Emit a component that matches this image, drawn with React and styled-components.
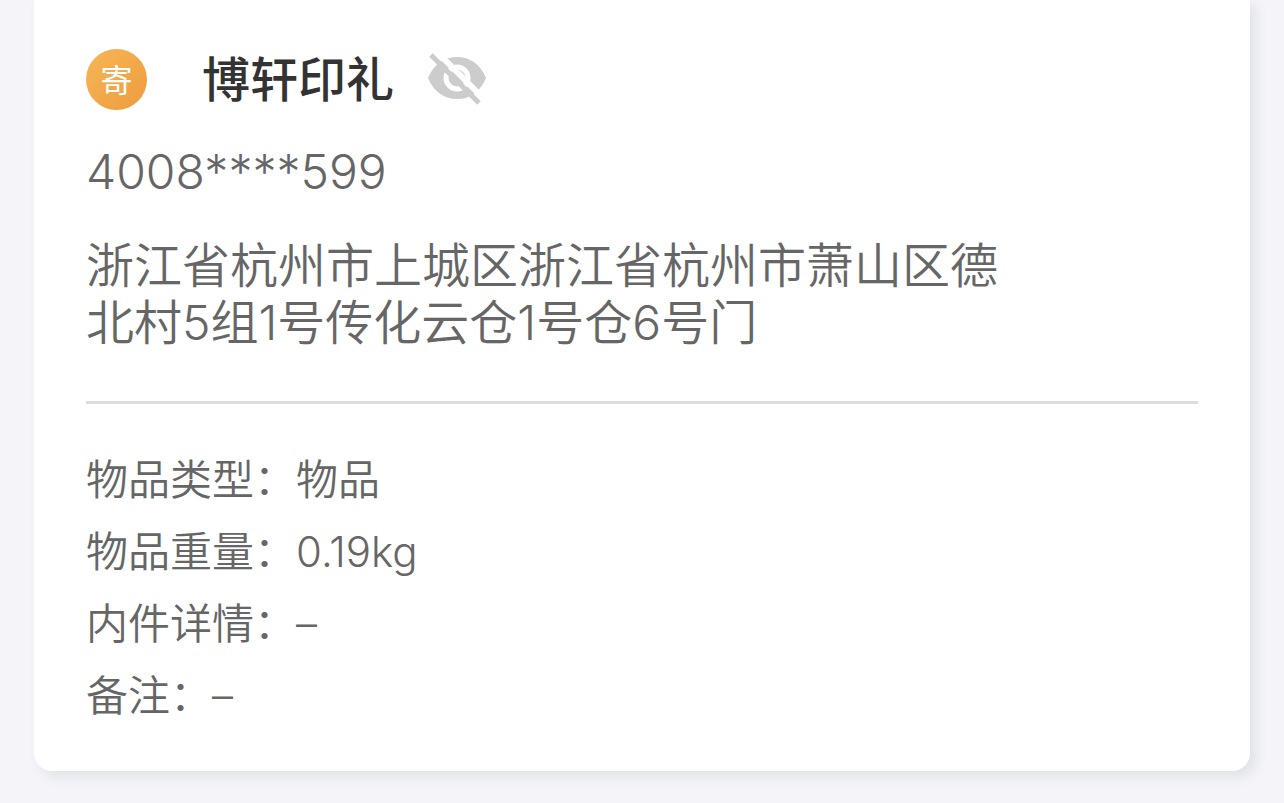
import React, { useState } from 'react';
import styled, { createGlobalStyle } from 'styled-components';

const GlobalStyle = createGlobalStyle`
  *, *::before, *::after { box-sizing: border-box; }
  body {
    margin: 0;
    background: #f4f4f9;
    color: #666;
    font-family: Inter, "Noto Sans CJK SC", sans-serif;
    font-weight: 350;
  }
`;

const Page = styled.main`
  padding: 0 34px 32px;
`;

const Card = styled.article`
  padding: 48px 52px 39px;
  background: #fff;
  border-radius: 0 0 18px 18px;
  box-shadow: 6px 6px 12px #dfe3e7;
`;

const SenderRow = styled.header`
  display: flex;
  align-items: center;
  height: 62px;
`;

const Badge = styled.span`
  display: flex;
  align-items: center;
  justify-content: center;
  width: 61px;
  height: 61px;
  padding-top: 4px;
  margin-right: 55px;
  border-radius: 50%;
  background: linear-gradient(135deg, #f6b756, #ee9b3e);
  color: #fff;
  font-size: 32px;
  line-height: 32px;
  font-weight: 400;
`;

const Name = styled.h1`
  margin: 0;
  padding-top: 2px;
  color: #333;
  font-size: 48px;
  line-height: 58px;
  font-weight: 500;
`;

const RevealButton = styled.button`
  display: flex;
  margin: 0 0 0 32px;
  padding: 0;
  border: 0;
  background: none;
  color: #ccc;
  cursor: pointer;
`;

const Phone = styled.p`
  margin: 33px 0 0;
  font-size: 48px;
  line-height: 58px;
`;

const Address = styled.address`
  max-width: 84%;
  margin: 36px 0 0;
  font-size: 48px;
  line-height: 57px;
  font-style: normal;
`;

const Divider = styled.hr`
  height: 3px;
  margin: 50px 0 40px;
  border: 0;
  background: #ddd;
`;

const Details = styled.dl`
  margin: 0;
  font-size: 42px;
  line-height: 72px;
`;

const DetailRow = styled.div`
  display: flex;
`;

const Term = styled.dt``;

const Value = styled.dd`
  margin: 0;
`;

const details = [
  ['物品类型', '物品'],
  ['物品重量', '0.19kg'],
  ['内件详情', '–'],
  ['备注', '–'],
];

function EyeOffIcon() {
  return (
    <svg width="62" height="56" viewBox="0 0 62 56" aria-hidden="true">
      <path d="M2 27C8 13 18 6 31 6s23 7 29 21C54 41 44 48 31 48S8 41 2 27Z" fill="currentColor" />
      <circle cx="31" cy="27" r="11" fill="none" stroke="#fff" strokeWidth="5" />
      <path d="M10 0 58 48" stroke="#fff" strokeWidth="6" />
      <path d="M5 4 53 52" stroke="currentColor" strokeWidth="5" />
    </svg>
  );
}

export default function App() {
  const [revealed, setRevealed] = useState(false);
  return (
    <>
      <GlobalStyle />
      <Page>
        <Card>
          <SenderRow>
            <Badge>寄</Badge>
            <Name>博轩印礼</Name>
            <RevealButton
              type="button"
              aria-label="显示完整信息"
              aria-pressed={revealed}
              onClick={() => setRevealed(!revealed)}
            >
              <EyeOffIcon />
            </RevealButton>
          </SenderRow>
          <Phone>4008****599</Phone>
          <Address>浙江省杭州市上城区浙江省杭州市萧山区德北村5组1号传化云仓1号仓6号门</Address>
          <Divider />
          <Details>
            {details.map(([term, value]) => (
              <DetailRow key={term}>
                <Term>{term}：</Term>
                <Value>{value}</Value>
              </DetailRow>
            ))}
          </Details>
        </Card>
      </Page>
    </>
  );
}
